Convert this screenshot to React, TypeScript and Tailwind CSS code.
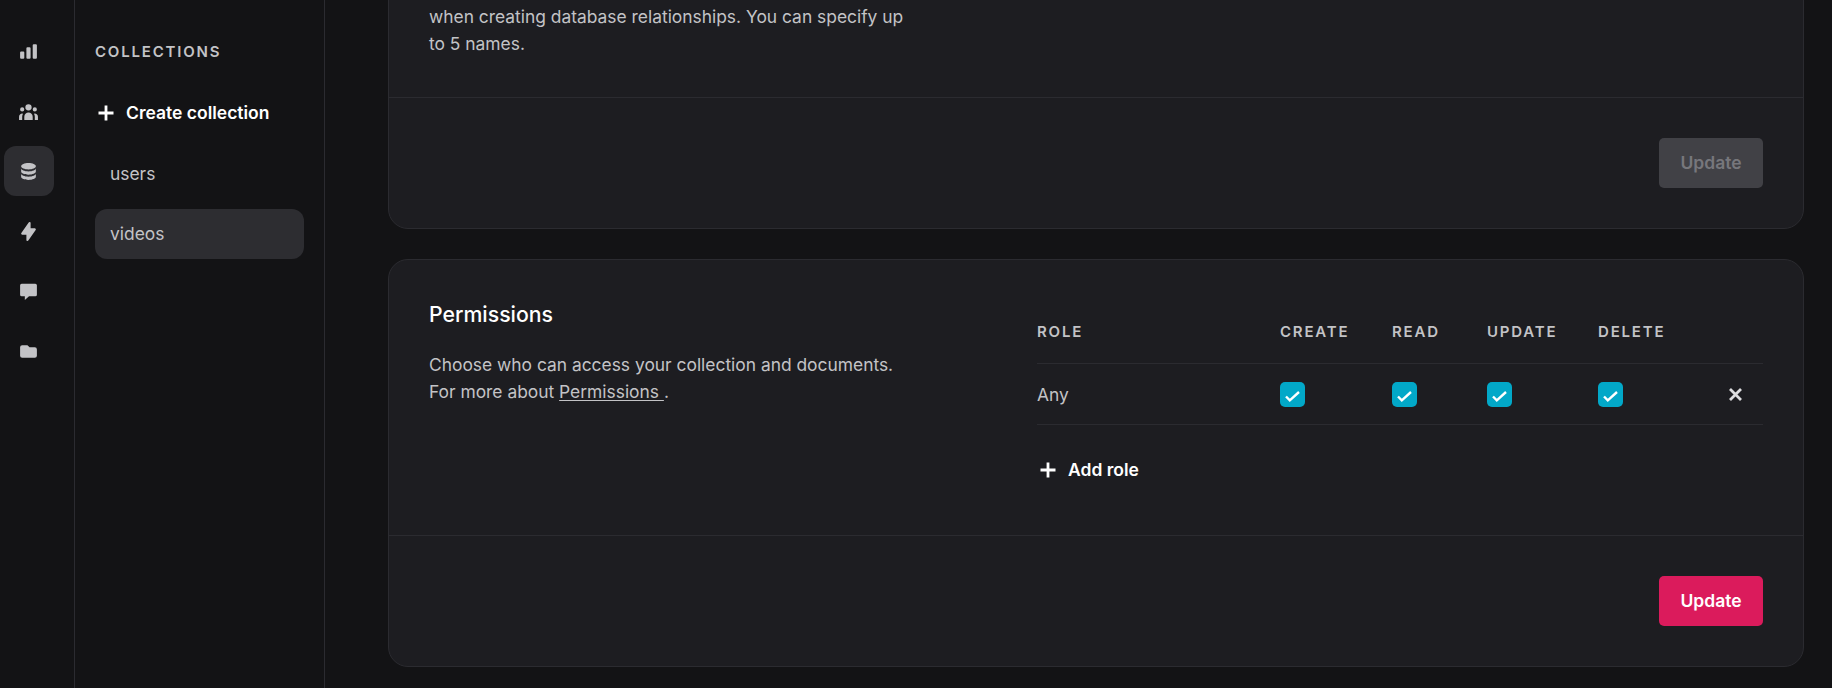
import { HiChartBar, HiDatabase, HiFolder, HiLightningBolt, HiUserGroup } from "react-icons/hi";

const font = { fontFamily: "Inter, 'Liberation Sans', sans-serif" };

function ChatIcon() {
  return (
    <svg viewBox="0 0 20 20" fill="currentColor" className="size-[21px]">
      <path d="M2 4A1.5 1.5 0 0 1 3.5 2.5h13A1.5 1.5 0 0 1 18 4v9a1.5 1.5 0 0 1-1.5 1.5h-6l-4 3.5v-3.5h-3A1.5 1.5 0 0 1 2 13V4Z" />
    </svg>
  );
}

function PlusIcon() {
  return (
    <svg viewBox="0 0 16 16" fill="none" stroke="currentColor" strokeWidth="2.8" className="size-[16px] shrink-0">
      <path d="M8 0.5v15M0.5 8h15" />
    </svg>
  );
}

const navIcons = [
  <HiChartBar className="size-[21px]" />,
  <HiUserGroup className="size-[21px]" />,
  <HiDatabase className="size-[21px]" />,
  <HiLightningBolt className="size-[21px]" />,
  <ChatIcon />,
  <HiFolder className="size-[21px]" />,
];

function Checkbox() {
  return (
    <span className="flex size-[25px] items-center justify-center rounded-[5px] bg-[#02a8c8] text-white">
      <svg viewBox="0 0 15 11" fill="none" stroke="currentColor" strokeWidth="2.4" className="mt-[4px] h-[11px] w-[15px]">
        <path d="M1 5.5l3.8 3.8L14 1" />
      </svg>
    </span>
  );
}

function UpdateButton({ active }: { active: boolean }) {
  return (
    <button
      type="button"
      className={
        active
          ? "h-[50px] w-[104px] rounded-[5px] bg-[#db1b5c] text-[17.5px] font-semibold leading-[26px] text-white"
          : "h-[50px] w-[104px] rounded-[5px] bg-[#414146] text-[17.5px] font-semibold leading-[26px] text-[#77777c]"
      }
    >
      Update
    </button>
  );
}

export default function App() {
  return (
    <div className="flex h-[688px] overflow-hidden bg-[#131315] text-[17.4px] leading-[27px] text-[#c3c3c6]" style={font}>
      <nav className="flex w-[75px] shrink-0 flex-col gap-[10px] border-r border-[#2b2b30] pl-[4px] pt-[26px]">
        {navIcons.map((icon, i) => (
          <div
            key={i}
            className={
              i === 2
                ? "flex size-[50px] items-center justify-center rounded-[12px] bg-[#2d2d31] pr-[1px]"
                : "flex size-[50px] items-center justify-center rounded-[12px] pr-[1px]"
            }
          >
            {icon}
          </div>
        ))}
      </nav>

      <aside className="flex w-[250px] shrink-0 flex-col gap-[10px] border-r border-[#2b2b30] pl-[20px] pr-[20px] pt-[27px] leading-[26px]">
        <div className="flex h-[50px] items-center text-[15px] font-semibold leading-[22px] tracking-[0.12em]">COLLECTIONS</div>
        <div className="mt-[1px] flex h-[50px] items-center gap-[12px] pl-[3px] text-[17.5px] font-semibold text-white">
          <PlusIcon />
          Create collection
        </div>
        <div className="mt-[1px] flex h-[50px] items-center pl-[15px]">users</div>
        <div className="flex h-[50px] items-center rounded-[12px] bg-[#2d2d31] pl-[15px]">videos</div>
      </aside>

      <main className="flex min-w-0 flex-1 flex-col justify-end gap-[30px] pb-[21px] pl-[63px] pr-[28px]">
        <section className="shrink-0 rounded-[20px] border border-[#2b2b30] bg-[#1d1d21]">
          <div className="px-[40px] pb-[40px] pt-[30px]">
            <p className="w-[480px]">
              Choose attributes to be used as document display names,
              when creating database relationships. You can specify up to 5 names.
            </p>
          </div>
          <div className="flex justify-end border-t border-[#2b2b30] p-[40px]">
            <UpdateButton active={false} />
          </div>
        </section>

        <section className="shrink-0 rounded-[20px] border border-[#2b2b30] bg-[#1d1d21]">
          <div className="flex h-[275px] px-[40px] pt-[39px]">
            <div className="w-[608px] shrink-0">
              <h2 className="text-[21.25px] font-medium leading-[30px] text-white">Permissions</h2>
              <p className="mt-[22px]">
                Choose who can access your collection and documents.
                <br />
                For more about <span className="underline underline-offset-2">Permissions </span>.
              </p>
            </div>
            <div className="min-w-0 flex-1">
              <div className="grid grid-cols-[243px_112px_95px_111px_1fr] items-center border-b border-[#2b2b30] pb-[20px] pt-[22px] text-[15px] font-semibold leading-[22px] tracking-[0.12em]">
                <span>ROLE</span>
                <span>CREATE</span>
                <span>READ</span>
                <span>UPDATE</span>
                <span>DELETE</span>
              </div>
              <div className="grid h-[61px] grid-cols-[243px_112px_95px_111px_1fr] items-center border-b border-[#2b2b30]">
                <span>Any</span>
                <Checkbox />
                <Checkbox />
                <Checkbox />
                <div className="flex items-center justify-between pr-[21px]">
                  <Checkbox />
                  <svg viewBox="0 0 13 13" fill="none" stroke="currentColor" strokeWidth="2.8" className="size-[13px] text-[#dedee0]">
                    <path d="M1 1l11 11M12 1L1 12" />
                  </svg>
                </div>
              </div>
              <div className="mt-[32px] flex items-center gap-[12px] pl-[3px] text-[17.5px] font-semibold leading-[26px] text-white">
                <PlusIcon />
                Add role
              </div>
            </div>
          </div>
          <div className="flex justify-end border-t border-[#2b2b30] p-[40px]">
            <UpdateButton active />
          </div>
        </section>
      </main>
    </div>
  );
}
